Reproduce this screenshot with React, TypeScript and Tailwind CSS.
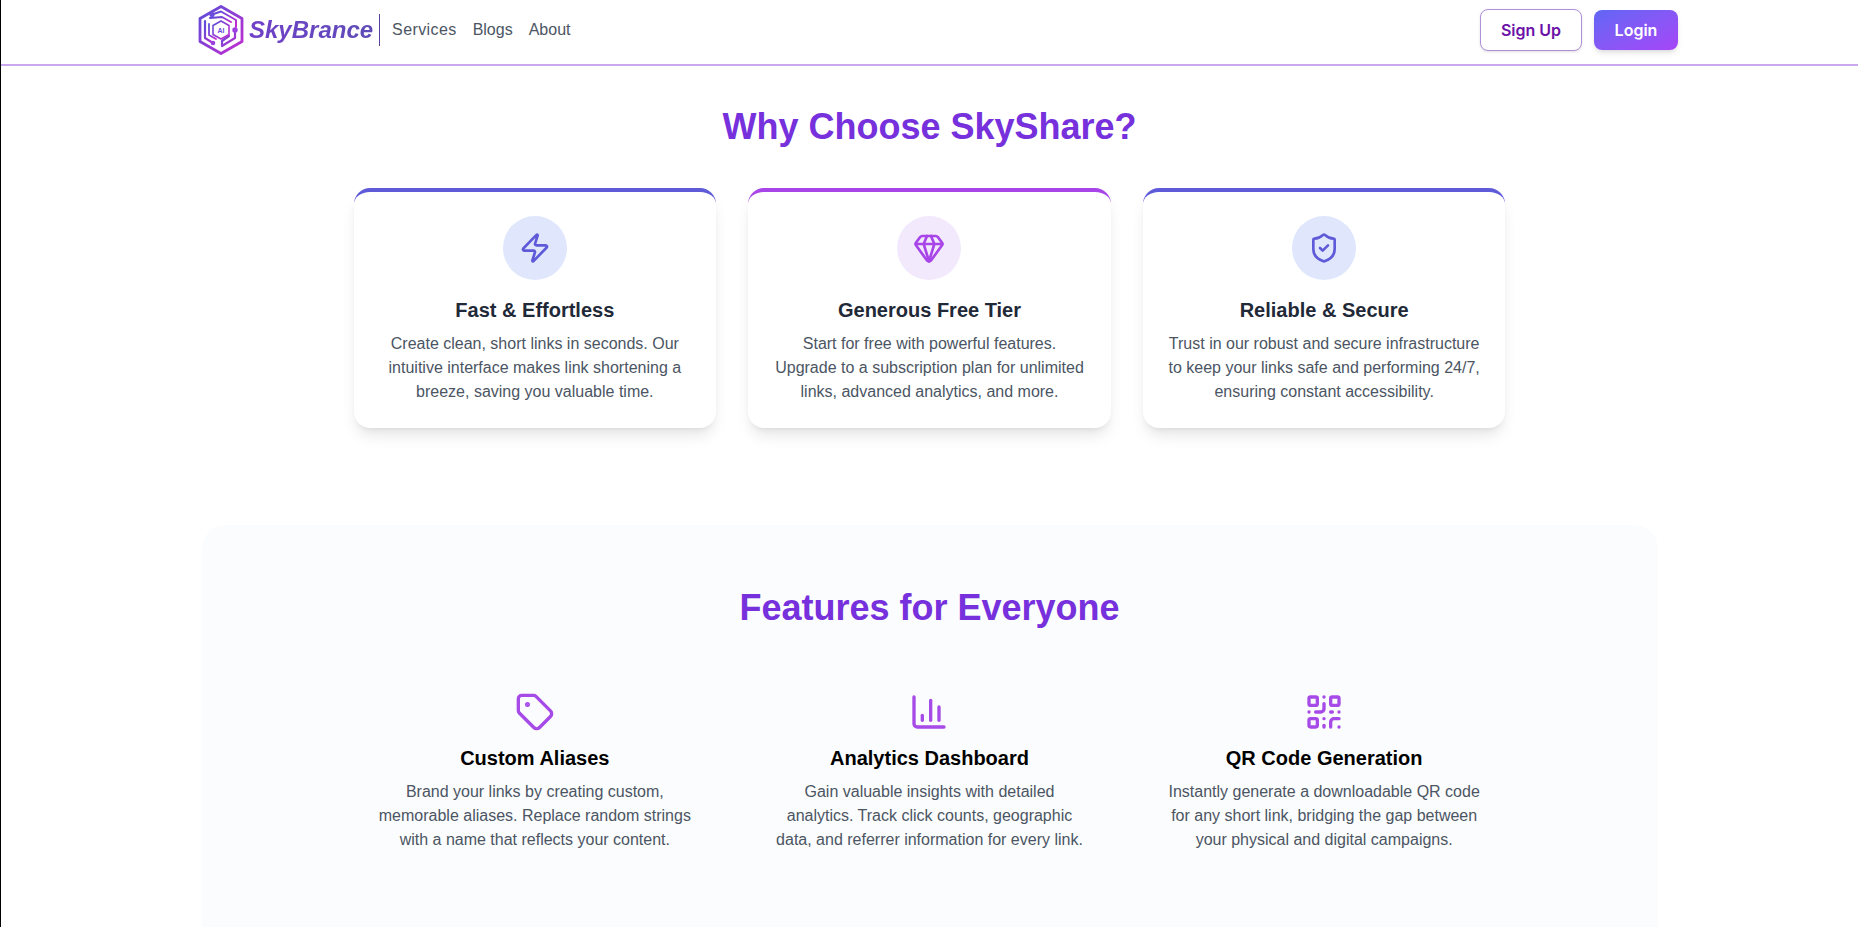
import React from 'react';
import { ChartColumn, Gem, QrCode, ShieldCheck, Tag, Zap } from 'lucide-react';

const reasons = [
  {
    title: 'Fast & Effortless',
    text: 'Create clean, short links in seconds. Our intuitive interface makes link shortening a breeze, saving you valuable time.',
    Icon: Zap,
    card: 'border-[#5f5bd8]',
    circle: 'bg-[#e0e7fc]',
    color: 'text-[#5f5bd8]',
  },
  {
    title: 'Generous Free Tier',
    text: 'Start for free with powerful features. Upgrade to a subscription plan for unlimited links, advanced analytics, and more.',
    Icon: Gem,
    card: 'border-[#a845e8]',
    circle: 'bg-[#f3e9fd]',
    color: 'text-[#a845e8]',
  },
  {
    title: 'Reliable & Secure',
    text: 'Trust in our robust and secure infrastructure to keep your links safe and performing 24/7, ensuring constant accessibility.',
    Icon: ShieldCheck,
    card: 'border-[#5f5bd8]',
    circle: 'bg-[#e0e7fc]',
    color: 'text-[#5f5bd8]',
  },
];

const features = [
  {
    title: 'Custom Aliases',
    text: 'Brand your links by creating custom, memorable aliases. Replace random strings with a name that reflects your content.',
    Icon: Tag,
  },
  {
    title: 'Analytics Dashboard',
    text: 'Gain valuable insights with detailed analytics. Track click counts, geographic data, and referrer information for every link.',
    Icon: ChartColumn,
  },
  {
    title: 'QR Code Generation',
    text: 'Instantly generate a downloadable QR code for any short link, bridging the gap between your physical and digital campaigns.',
    Icon: QrCode,
  },
];

const Logo = () => (
  <svg width="46" height="50" viewBox="0 0 46 50" fill="none">
    <defs>
      <linearGradient id="logoGrad" x1="0" y1="0" x2="1" y2="1">
        <stop offset="0" stopColor="#5a4fd8" />
        <stop offset="1" stopColor="#c42bd0" />
      </linearGradient>
    </defs>
    <g stroke="url(#logoGrad)" strokeLinejoin="round" strokeLinecap="round">
      {/* outer hexagon */}
      <path d="M23 1.5 L44 13.5 V36.5 L23 48.5 L2 36.5 V13.5 Z" strokeWidth="2.8" />
      {/* circuit traces */}
      <path d="M14 9.5 L23 6.5 L38 15 V22" strokeWidth="2" />
      <path d="M7 16 V33 L15 38" strokeWidth="2.2" />
      <path d="M12 13 L24 12 L33 17" strokeWidth="2" />
      <path d="M37 27 V33 L24 41 V36 L31 31" strokeWidth="2.2" />
      <path d="M11 19 V30 L18 34" strokeWidth="1.8" />
      {/* AI cube */}
      <path d="M23 16 L31 20.5 V29.5 L23 34 L15 29.5 V20.5 Z" strokeWidth="1.6" />
    </g>
    <circle cx="14" cy="9.5" r="2.6" fill="#6a4cdc" />
    <circle cx="37" cy="25" r="2.7" fill="#9c3fe0" />
    <circle cx="15" cy="38" r="2.3" fill="#9a3fe0" />
    <text x="23" y="27.5" textAnchor="middle" fontSize="7" fontWeight="700" fill="#6d4ddb" fontFamily="Liberation Sans, sans-serif">AI</text>
  </svg>
);

const Header = () => (
  <header className="h-[66px] pb-1 border-b-2 border-[#c9a8ee] bg-white flex shrink-0">
    <div className="ml-[197px] w-[1480px] flex items-center justify-between">
      <div className="flex items-center">
        <Logo />
        <span className="ml-[5px] text-[24px] font-bold italic bg-gradient-to-r from-[#7040c8] to-[#5e4bb8] bg-clip-text text-transparent">SkyBrance</span>
        <div className="ml-[6px] w-px h-[32px] bg-[#5b3f9e]" />
        <nav className="ml-[12px] flex items-center gap-4 text-[16px] text-[#4b5563]">
          <a className="tracking-[0.4px]">Services</a>
          <a>Blogs</a>
          <a>About</a>
        </nav>
      </div>
      <div className="flex items-center gap-3 font-['Inter',sans-serif] text-[16px] font-semibold">
        <button className="w-[102px] h-[42px] rounded-lg border border-[#b08fdb] bg-white text-[#6b11a8] shadow-sm">Sign Up</button>
        <button className="w-[84px] h-[40px] rounded-lg bg-gradient-to-br from-[#5f66f5] to-[#a544f7] text-white shadow-md">Login</button>
      </div>
    </div>
  </header>
);

export default function App() {
  return (
    <div className="h-screen overflow-hidden bg-white border-l border-black flex flex-col font-['Liberation_Sans',Arial,sans-serif]">
      <Header />
      <main className="flex flex-col items-center">
        <h2 className="mt-[38px] text-[36px] leading-[46px] font-bold text-[#7630dc]">Why Choose SkyShare?</h2>
        <div className="mt-[38px] w-[1152px] grid grid-cols-3 gap-8">
          {reasons.map(({ title, text, Icon, card, circle, color }) => (
            <div key={title} className={`h-[240px] rounded-2xl border-t-4 bg-white shadow-lg px-6 pt-6 flex flex-col items-center text-center ${card}`}>
              <div className={`w-16 h-16 rounded-full flex items-center justify-center ${circle}`}>
                <Icon className={`w-8 h-8 ${color}`} strokeWidth={2} />
              </div>
              <h3 className="mt-4 text-[20px] leading-7 font-semibold text-[#1f2937]">{title}</h3>
              <p className="mt-2 text-[16px] leading-6 text-[#4b5563]">{text}</p>
            </div>
          ))}
        </div>
        <section className="mt-[97px] w-[1456px] h-[500px] rounded-3xl bg-[#fbfcfd] flex flex-col items-center">
          <h2 className="mt-[60px] text-[36px] leading-[46px] font-bold text-[#7630dc]">Features for Everyone</h2>
          <div className="mt-[61px] w-[1152px] grid grid-cols-3 gap-8">
            {features.map(({ title, text, Icon }) => (
              <div key={title} className="px-6 flex flex-col items-center text-center">
                <Icon className="w-10 h-10 text-[#a64ae8]" strokeWidth={2} />
                <h3 className="mt-3 text-[20px] leading-7 font-bold text-black">{title}</h3>
                <p className="mt-2 text-[16px] leading-6 text-[#4b5563]">{text}</p>
              </div>
            ))}
          </div>
        </section>
      </main>
    </div>
  );
}
